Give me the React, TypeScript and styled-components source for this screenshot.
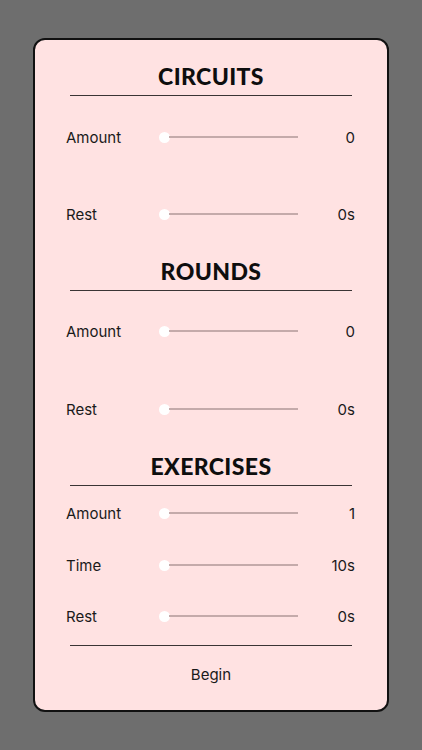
import styled, { createGlobalStyle } from "styled-components";

const GlobalStyle = createGlobalStyle`
  html, body {
    margin: 0;
    padding: 0;
    background: #6e6e6e;
  }
  body {
    font-family: "Inter", "Liberation Sans", sans-serif;
    color: #111;
  }
`;

const Page = styled.div`
  width: 422px;
  height: 750px;
  padding: 38px 33px;
  box-sizing: border-box;
`;

const Card = styled.div`
  height: 674px;
  box-sizing: border-box;
  background: #ffe2e2;
  border: 2px solid #111;
  border-radius: 12px;
  display: flex;
  flex-direction: column;
`;

const Title = styled.div<{ $top: number }>`
  margin-top: ${(p) => p.$top}px;
  height: 30px;
  line-height: 30px;
  text-align: center;
  font-family: "Lato", sans-serif;
  font-weight: 900;
  font-size: 23px;
  letter-spacing: 0.4px;
  color: #0e0e0e;
`;

const Divider = styled.div<{ $top: number }>`
  margin: ${(p) => p.$top}px 35px 0;
  height: 1px;
  background: #3a3434;
`;

const Row = styled.div<{ $top: number }>`
  margin-top: ${(p) => p.$top}px;
  height: 30px;
  padding: 0 32px 0 31px;
  display: grid;
  grid-template-columns: 93px 139px 1fr;
  align-items: center;
  font-size: 15px;
  color: #1a1a1a;
`;

const Label = styled.span``;

const Value = styled.span`
  text-align: right;
`;

const Slider = styled.div`
  display: flex;
  align-items: center;
`;

const Thumb = styled.div`
  width: 11px;
  height: 11px;
  border-radius: 50%;
  background: #fff;
  flex-shrink: 0;
`;

const Track = styled.div`
  flex: 1;
  height: 2px;
  margin-left: -1px;
  background: #c4aaaa;
`;

const Begin = styled.div`
  margin-top: 14px;
  height: 30px;
  line-height: 30px;
  text-align: center;
  font-size: 15px;
  color: #1a1a1a;
`;

type Setting = { label: string; value: string; top: number };

const SettingRow = ({ label, value, top }: Setting) => (
  <Row $top={top}>
    <Label>{label}</Label>
    <Slider>
      <Thumb />
      <Track />
    </Slider>
    <Value>{value}</Value>
  </Row>
);

const sections: { title: string; top: number; rows: Setting[] }[] = [
  {
    title: "CIRCUITS",
    top: 21,
    rows: [
      { label: "Amount", value: "0", top: 26 },
      { label: "Rest", value: "0s", top: 47 },
    ],
  },
  {
    title: "ROUNDS",
    top: 27,
    rows: [
      { label: "Amount", value: "0", top: 25 },
      { label: "Rest", value: "0s", top: 48 },
    ],
  },
  {
    title: "EXERCISES",
    top: 27,
    rows: [
      { label: "Amount", value: "1", top: 12 },
      { label: "Time", value: "10s", top: 22 },
      { label: "Rest", value: "0s", top: 21 },
    ],
  },
];

export default function App() {
  return (
    <>
      <GlobalStyle />
      <Page>
        <Card>
          {sections.map((s) => (
            <div key={s.title}>
              <Title $top={s.top}>{s.title}</Title>
              <Divider $top={4} />
              {s.rows.map((r) => (
                <SettingRow key={r.label} {...r} />
              ))}
            </div>
          ))}
          <Divider $top={14} />
          <Begin>Begin</Begin>
        </Card>
      </Page>
    </>
  );
}
